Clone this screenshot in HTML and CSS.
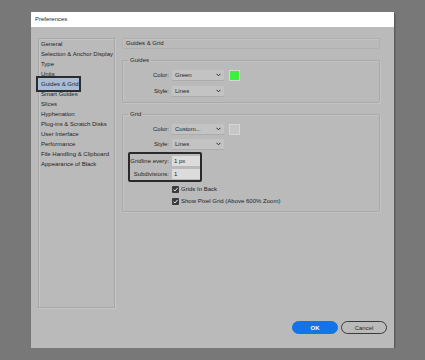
FILE: index.html
```html
<!DOCTYPE html>
<html lang="en">
<head>
  <meta charset="UTF-8">
  <meta name="viewport" content="width=device-width, initial-scale=1.0">
  <title>Preferences</title>
  <link rel="stylesheet" href="styles.css">
</head>
<body>
  <div class="dialog">
    <div class="titlebar">Preferences</div>
    <div class="main">
      <ul class="nav">
        <li>General</li>
        <li>Selection &amp; Anchor Display</li>
        <li>Type</li>
        <li>Units</li>
        <li class="active">Guides &amp; Grid</li>
        <li>Smart Guides</li>
        <li>Slices</li>
        <li>Hyphenation</li>
        <li>Plug-ins &amp; Scratch Disks</li>
        <li>User Interface</li>
        <li>Performance</li>
        <li>File Handling &amp; Clipboard</li>
        <li>Appearance of Black</li>
      </ul>

      <div class="panel">
        <div class="panel-title">Guides &amp; Grid</div>

        <fieldset class="group guides">
          <legend>Guides</legend>
          <div class="row">
            <label>Color:</label>
            <div class="select">Green
              <svg class="chev" width="5" height="4" viewBox="0 0 5 4"><path d="M0.5 0.8 L2.5 2.8 L4.5 0.8" fill="none" stroke="#2a2a2a" stroke-width="1"/></svg>
            </div>
            <span class="swatch green"></span>
          </div>
          <div class="row">
            <label>Style:</label>
            <div class="select">Lines
              <svg class="chev" width="5" height="4" viewBox="0 0 5 4"><path d="M0.5 0.8 L2.5 2.8 L4.5 0.8" fill="none" stroke="#2a2a2a" stroke-width="1"/></svg>
            </div>
          </div>
        </fieldset>

        <fieldset class="group grid">
          <legend>Grid</legend>
          <div class="row">
            <label>Color:</label>
            <div class="select">Custom...
              <svg class="chev" width="5" height="4" viewBox="0 0 5 4"><path d="M0.5 0.8 L2.5 2.8 L4.5 0.8" fill="none" stroke="#2a2a2a" stroke-width="1"/></svg>
            </div>
            <span class="swatch custom"></span>
          </div>
          <div class="row">
            <label>Style:</label>
            <div class="select">Lines
              <svg class="chev" width="5" height="4" viewBox="0 0 5 4"><path d="M0.5 0.8 L2.5 2.8 L4.5 0.8" fill="none" stroke="#2a2a2a" stroke-width="1"/></svg>
            </div>
          </div>

          <div class="focus-box">
            <div class="row">
              <label>Gridline every:</label>
              <div class="field">1 px</div>
            </div>
            <div class="row">
              <label>Subdivisions:</label>
              <div class="field">1</div>
            </div>
          </div>

          <div class="check">
            <span class="box"><svg width="7" height="7" viewBox="0 0 7 7"><path d="M1.5 3.6 L2.9 5 L5.6 1.9" fill="none" stroke="#eee" stroke-width="1"/></svg></span>
            Grids In Back
          </div>
          <div class="check">
            <span class="box"><svg width="7" height="7" viewBox="0 0 7 7"><path d="M1.5 3.6 L2.9 5 L5.6 1.9" fill="none" stroke="#eee" stroke-width="1"/></svg></span>
            Show Pixel Grid (Above 600% Zoom)
          </div>
        </fieldset>
      </div>
    </div>

    <div class="footer">
      <button class="btn primary">OK</button>
      <button class="btn">Cancel</button>
    </div>
  </div>
</body>
</html>
```

FILE: styles.css
```css
* { box-sizing: border-box; }
body { margin: 0; background: #787878; font-family: 'Liberation Sans', Arial, sans-serif; font-size: 6px; color: #1f1f1f; }

.dialog { width: 363px; height: 336px; margin: 12px 0 0 31px; background: #bababa; box-shadow: 1px 1px 0 #5c5c5c, 2px 2px 0 #6a6a6a; display: flex; flex-direction: column; }
.titlebar { height: 15px; line-height: 15px; background: #fff; padding-left: 4px; }

.main { display: flex; gap: 7px; padding: 11px 0 0 7px; }

.nav { list-style: none; margin: 0; padding: 0; width: 77px; height: 270px; border: 1px solid #a8a8a8; box-shadow: inset 1px 1px 0 #c4c4c4, 1px 1px 0 #c6c6c6; }
.nav li { line-height: 10px; padding-left: 2px; white-space: nowrap; }
.nav li.active { width: 39px; background: #a9bdd7; box-shadow: 0 0 0 1px #a9bdd7, 0 0 0 3px #2c2c2c; }

.panel { width: 258px; }
.panel-title { height: 11px; line-height: 9px; padding-left: 3px; border: 1px solid #b0b0b0; border-radius: 2px; box-shadow: inset 1px 1px 0 #c3c3c3; }

.group { margin: 6px 0 0; padding: 0 0 6px; border: 1px solid #aaaaaa; border-radius: 2px; box-shadow: inset 1px 1px 0 #c3c3c3, 1px 1px 0 #c3c3c3; min-width: 0; }
.group legend { margin-left: 5px; padding: 0 2px; line-height: 10px; }
.guides .row:first-of-type { margin-top: 5px; }
.guides .row + .row { margin-top: 6px; }
.grid { padding-bottom: 5px; }
.grid > .row:first-of-type { margin-top: 5px; }
.grid > .row + .row { margin-top: 5px; }

.row { display: flex; align-items: center; height: 10px; }
.row label { width: 47px; text-align: right; padding-right: 1px; }
.select { position: relative; width: 52px; height: 10px; line-height: 10px; margin-left: 2px; padding-left: 3px; background: #c3c3c3; border-radius: 1px; box-shadow: 0 1px 0 #acacac; }
.chev { position: absolute; right: 3px; top: 3px; }
.swatch { width: 11px; height: 11px; margin-left: 5px; border: 1px solid #d6d6d6; }
.swatch.green { background: #3ef03e; }
.swatch.custom { background: #c6c6c6; }

.focus-box { width: 74px; margin: 3px 0 0 5px; padding: 2px 0 1px; border: 2px solid #2a2a2a; border-radius: 2px; }
.focus-box .row + .row { margin-top: 3px; }
.focus-box .row label { width: 40px; }
.field { width: 28px; height: 10px; line-height: 10px; margin-left: 2px; padding-left: 2px; background: #dcdcdc; }

.check { display: flex; align-items: center; height: 10px; margin-left: 49px; gap: 2px; }
.grid .focus-box + .check { margin-top: 2px; }
.check + .check { margin-top: 2px; }
.box { display: flex; width: 7px; height: 7px; background: #3a3a3a; border-radius: 1px; }

.footer { display: flex; justify-content: flex-end; gap: 3px; margin-top: auto; padding: 0 7px 14px 0; }
.btn { width: 46px; height: 13px; padding: 0; border-radius: 7px; font: 6px 'Liberation Sans', Arial, sans-serif; color: #2a2a2a; background: transparent; border: 1px solid #3a3a3a; }
.btn.primary { background: #1473e6; border-color: #1473e6; color: #fff; font-weight: bold; }
```
